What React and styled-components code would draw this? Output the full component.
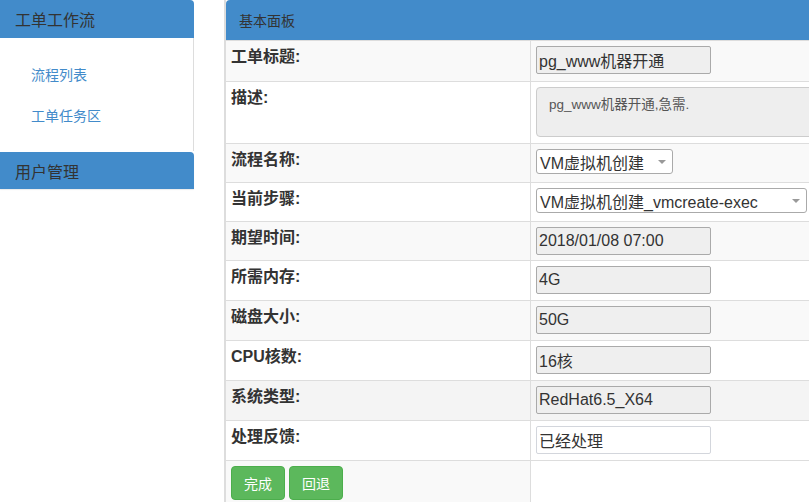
import React from "react";
import styled, { createGlobalStyle } from "styled-components";

const GlobalStyle = createGlobalStyle`
  body {
    margin: 0;
    background: #fff;
    overflow: hidden;
    font-family: "Liberation Sans", Arial, "Noto Sans CJK SC", sans-serif;
    color: #333;
  }
`;

const fields = [
  { label: "工单标题:", kind: "input", value: "pg_www机器开通", h: 41 },
  { label: "描述:", kind: "textarea", value: "pg_www机器开通,急需.", h: 62 },
  { label: "流程名称:", kind: "select", value: "VM虚拟机创建", width: 137, h: 39 },
  { label: "当前步骤:", kind: "select", value: "VM虚拟机创建_vmcreate-exec", width: 271, h: 39 },
  { label: "期望时间:", kind: "input", value: "2018/01/08 07:00", h: 39 },
  { label: "所需内存:", kind: "input", value: "4G", h: 40 },
  { label: "磁盘大小:", kind: "input", value: "50G", h: 40 },
  { label: "CPU核数:", kind: "input", value: "16核", h: 40 },
  { label: "系统类型:", kind: "input", value: "RedHat6.5_X64", h: 40, hover: true },
  { label: "处理反馈:", kind: "edit", value: "已经处理", h: 40 },
];

const App = () => {
  return (
    <Page>
      <GlobalStyle />
      <Sidebar>
        <SideHeader>工单工作流</SideHeader>
        <SideBody>
          <SideLink>流程列表</SideLink>
          <SideLink>工单任务区</SideLink>
        </SideBody>
        <SideHeader second>用户管理</SideHeader>
      </Sidebar>

      <Panel>
        <PanelHeader>基本面板</PanelHeader>
        {fields.map((f, i) => (
          <Row key={f.label} h={f.h} striped={i % 2 === 0} hover={f.hover}>
            <LabelCell>{f.label}</LabelCell>
            <ValueCell>
              {f.kind === "input" && <Field readOnly defaultValue={f.value} />}
              {f.kind === "edit" && <Field editable defaultValue={f.value} />}
              {f.kind === "textarea" && <Desc>{f.value}</Desc>}
              {f.kind === "select" && (
                <Select w={f.width}>
                  <span>{f.value}</span>
                  <Caret />
                </Select>
              )}
            </ValueCell>
          </Row>
        ))}
        <Row h={50} striped>
          <LabelCell>
            <Buttons>
              <Button>完成</Button>
              <Button>回退</Button>
            </Buttons>
          </LabelCell>
          <ValueCell plain />
        </Row>
      </Panel>
    </Page>
  );
};

const Page = styled.div`
  display: flex;
  align-items: flex-start;
  width: 809px;
  height: 502px;
  overflow: hidden;
`;

const Sidebar = styled.div`
  flex: 0 0 194px;
  display: flex;
  flex-direction: column;
`;

const SideHeader = styled.div`
  height: ${({ second }) => (second ? "37px" : "38px")};
  margin-top: ${({ second }) => (second ? "1px" : "0")};
  display: flex;
  align-items: center;
  padding-left: 15px;
  background: #428bca;
  border-top-right-radius: 4px;
  font-size: 16px;
  color: #333;
  box-shadow: ${({ second }) => (second ? "0 1px 1px rgba(0,0,0,0.08)" : "none")};
`;

const SideBody = styled.div`
  height: 113px;
  box-sizing: border-box;
  padding: 27px 0 0 31px;
  border-right: 1px solid #ddd;
  display: flex;
  flex-direction: column;
  gap: 21px;
`;

const SideLink = styled.a`
  font-size: 14px;
  line-height: 20px;
  color: #428bca;
  cursor: pointer;
`;

const Panel = styled.div`
  flex: 0 0 600px;
  margin-left: 30px;
  border-left: 2px solid #ddd;
`;

const PanelHeader = styled.div`
  height: 40px;
  display: flex;
  align-items: center;
  padding-left: 13px;
  background: #428bca;
  border-top-left-radius: 4px;
  font-size: 14px;
  color: #333;
`;

const Row = styled.div`
  display: grid;
  grid-template-columns: 305px 1fr;
  height: ${({ h }) => h}px;
  box-sizing: border-box;
  border-top: 1px solid #ddd;
  background: ${({ striped, hover }) => (hover ? "#f4f4f4" : striped ? "#f9f9f9" : "#fff")};
`;

const LabelCell = styled.div`
  padding: 5px 5px 0;
  font-size: 16px;
  line-height: 22px;
  font-weight: bold;
  color: #333;
  border-right: 1px solid #ddd;
`;

const ValueCell = styled.div`
  padding: 5px 5px 0;
  background: ${({ plain }) => (plain ? "#fff" : "transparent")};
`;

const Field = styled.input`
  box-sizing: border-box;
  width: 175px;
  height: 28px;
  padding: 0 2px;
  margin: 0;
  font-family: "Liberation Sans", Arial, "Noto Sans CJK SC", sans-serif;
  font-size: 16px;
  color: #333;
  background: ${({ editable }) => (editable ? "#fff" : "#efefef")};
  border: 1px solid ${({ editable }) => (editable ? "#d3d6dc" : "#aaa")};
  border-radius: 2px;
  outline: none;
`;

const Desc = styled.div`
  box-sizing: border-box;
  width: 300px;
  height: 50px;
  padding: 7px 12px;
  font-size: 13.5px;
  line-height: 20px;
  color: #555;
  background: #eee;
  border: 1px solid #ccc;
  border-radius: 4px;
`;

const Select = styled.div`
  box-sizing: border-box;
  width: ${({ w }) => w}px;
  height: 25px;
  display: flex;
  align-items: center;
  padding-left: 3px;
  font-size: 16px;
  color: #333;
  background: #fff;
  border: 1px solid #aaa;
  border-radius: 3px;
`;

const Caret = styled.span`
  margin-left: auto;
  margin-right: 6px;
  width: 0;
  height: 0;
  border-left: 4px solid transparent;
  border-right: 4px solid transparent;
  border-top: 4px solid #999;
`;

const Buttons = styled.div`
  display: flex;
  gap: 4px;
`;

const Button = styled.button`
  width: 54px;
  height: 34px;
  padding: 0;
  font-family: "Liberation Sans", Arial, "Noto Sans CJK SC", sans-serif;
  font-size: 14px;
  font-weight: normal;
  color: #fff;
  background: #5cb85c;
  border: 1px solid #4cae4c;
  border-radius: 4px;
  cursor: pointer;
`;

export default App;
